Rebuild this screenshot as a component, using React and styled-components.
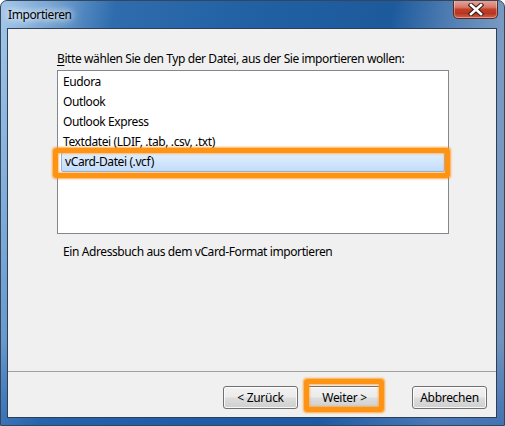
import React from "react";
import styled, { createGlobalStyle } from "styled-components";

const Global = createGlobalStyle`
  html, body { margin: 0; padding: 0; background: #ffffff; }
  body { font-family: "Noto Sans", "Open Sans", sans-serif; }
`;

const Window = styled.div`
  position: relative;
  width: 505px;
  height: 426px;
  box-sizing: border-box;
  display: flex;
  flex-direction: column;
  border: 1px solid #34465c;
  border-radius: 7px 7px 0 0;
  background:
    linear-gradient(to bottom, rgba(0,0,0,0) 0%, rgba(0,0,0,0) 80%, rgba(30,90,170,0.55) 100%),
    linear-gradient(100deg, #a4c8ea 0%, #78a7d6 8%, #2f6cad 20%, #2060a3 45%, #1d5a9c 68%, #4f7db2 78%, #7a9bc3 88%, #6f90bb 100%);
  overflow: hidden;
`;

const TitleBar = styled.div`
  height: 27px;
  flex: none;
  display: flex;
  align-items: center;
  padding-left: 7px;
  position: relative;
`;

const TitleText = styled.span`
  font-family: "Noto Sans", "Open Sans", sans-serif;
  font-size: 12px;
  letter-spacing: -0.4px;
  color: #000;
  position: relative;
  margin-top: -1px;
  text-shadow: 0 0 6px #fff, 0 0 10px rgba(255,255,255,0.9), 0 0 16px rgba(255,255,255,0.8);
`;

const CloseButton = styled.div`
  position: absolute;
  top: -1px;
  right: 6px;
  width: 45px;
  height: 19px;
  box-sizing: border-box;
  border: 1px solid #5a2a24;
  border-top: none;
  border-radius: 0 0 5px 5px;
  background: linear-gradient(to bottom, #e9a99c 0%, #d8786a 40%, #c0402c 52%, #b8361f 75%, #d0644c 100%);
  box-shadow: inset 0 0 0 1px rgba(255,255,255,0.35);
  display: flex;
  align-items: center;
  justify-content: center;
`;

const FrameBody = styled.div`
  flex: 1;
  display: flex;
  padding: 0 7px 7px 6px;
`;

const Client = styled.div`
  flex: 1;
  display: flex;
  flex-direction: column;
  background: #f0f0f0;
  border: 1px solid #2e3f55;
  font-size: 12px;
  color: #000;
`;

const Content = styled.div`
  flex: 1;
  display: flex;
  flex-direction: column;
  padding: 22px 47px 0 49px;
`;

const Label = styled.div`
  line-height: 16px;
  height: 16px;
  letter-spacing: -0.4px;
  margin-bottom: 3px;
  white-space: nowrap;
`;

const ListBox = styled.div`
  position: relative;
  height: 164px;
  box-sizing: border-box;
  border: 1px solid #828790;
  background: #fff;
  padding-top: 1px;
  display: flex;
  flex-direction: column;
`;

const Item = styled.div`
  height: 20px;
  line-height: 20px;
  box-sizing: border-box;
  padding-left: ${(p) => (p.$selected ? "3px" : "5px")};
  margin: 0 ${(p) => (p.$selected ? "3px" : "0")};
  letter-spacing: -0.4px;
  white-space: nowrap;
  border-radius: 2px;
  ${(p) =>
    p.$selected
      ? `background: linear-gradient(to bottom, #e3effd 0%, #d2e6fc 50%, #c2dcfb 100%);
         border: 1px solid #8fb5e2;
         line-height: 18px;`
      : ""}
`;

const Highlight = styled.div`
  position: absolute;
  box-sizing: border-box;
  border: 5px solid #ff9414;
  border-radius: 3px;
  box-shadow: 0 0 2px 1px rgba(255,140,0,0.7), inset 0 0 2px 1px rgba(255,150,30,0.6);
  pointer-events: none;
`;

const Description = styled.div`
  margin-top: 10px;
  padding-left: 6px;
  line-height: 16px;
  letter-spacing: -0.4px;
`;

const ButtonBar = styled.div`
  position: relative;
  border-top: 1px solid #a0a0a0;
  display: flex;
  justify-content: flex-end;
  align-items: flex-start;
  padding: 14px 9px 8px 0;
  gap: 9px;
`;

const Button = styled.button`
  width: 75px;
  height: 23px;
  box-sizing: border-box;
  border: 1px solid #707070;
  border-radius: 3px;
  background: linear-gradient(to bottom, #f2f2f2 0%, #ebebeb 48%, #dddddd 52%, #cfcfcf 100%);
  box-shadow: inset 0 0 0 1px rgba(255,255,255,0.8);
  font-family: "Noto Sans", "Open Sans", sans-serif;
  font-size: 12px;
  letter-spacing: -0.3px;
  color: #000;
  padding: 0;
  margin-left: ${(p) => p.$gapLeft || 0}px;
`;

const Underlined = styled.span`
  text-decoration: underline;
  text-underline-offset: 2px;
`;

const CloseGlyph = () => (
  <svg width="16" height="13" viewBox="0 0 16 13">
    <path d="M3 2 L13 11 M13 2 L3 11" stroke="#3a1a16" strokeWidth="4.6" strokeLinecap="square" fill="none" />
    <path d="M3 2 L13 11 M13 2 L3 11" stroke="#ffffff" strokeWidth="2.6" strokeLinecap="square" fill="none" />
  </svg>
);

export default function App() {
  const items = [
    "Eudora",
    "Outlook",
    "Outlook Express",
    "Textdatei (LDIF, .tab, .csv, .txt)",
    "vCard-Datei (.vcf)",
  ];
  return (
    <>
      <Global />
      <Window>
        <TitleBar>
          <TitleText>Importieren</TitleText>
          <CloseButton>
            <CloseGlyph />
          </CloseButton>
        </TitleBar>
        <FrameBody>
          <Client>
            <Content>
              <Label>
                <Underlined>B</Underlined>itte wählen Sie den Typ der Datei, aus der Sie importieren wollen:
              </Label>
              <ListBox>
                {items.map((t, i) => (
                  <Item key={t} $selected={i === 4}>
                    {t}
                  </Item>
                ))}
                <Highlight style={{ left: -5, top: 77, width: 397, height: 30 }} />
              </ListBox>
              <Description>Ein Adressbuch aus dem vCard-Format importieren</Description>
            </Content>
            <ButtonBar>
              <Button>&lt; Zurück</Button>
              <Button>Weiter &gt;</Button>
              <Button $gapLeft={21}>Abbrechen</Button>
              <Highlight style={{ left: 296, top: 7, width: 80, height: 33 }} />
            </ButtonBar>
          </Client>
        </FrameBody>
      </Window>
    </>
  );
}
